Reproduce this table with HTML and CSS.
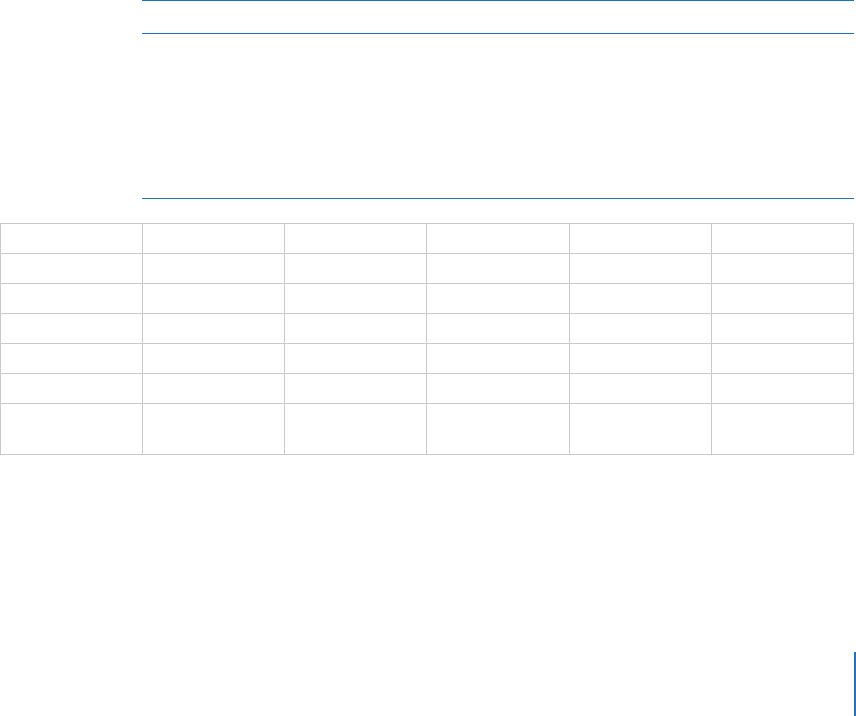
FILE: index.html
```html
<!DOCTYPE html>
<html>

<head>
    <meta charset="UTF-8" />
    <title>Reference</title>
    <link rel="stylesheet" href="styles.css">
</head>

<body>
    <div class="page">
        <div class="topic-head"></div>
        <div class="topic-summary"></div>

        <table class="grid">
            <tr><td></td><td></td><td></td><td></td><td></td><td></td></tr>
            <tr><td></td><td></td><td></td><td></td><td></td><td></td></tr>
            <tr><td></td><td></td><td></td><td></td><td></td><td></td></tr>
            <tr><td></td><td></td><td></td><td></td><td></td><td></td></tr>
            <tr><td></td><td></td><td></td><td></td><td></td><td></td></tr>
            <tr><td></td><td></td><td></td><td></td><td></td><td></td></tr>
            <tr class="tall"><td></td><td></td><td></td><td></td><td></td><td></td></tr>
        </table>

        <div class="side-mark"></div>
    </div>
</body>

</html>
```

FILE: styles.css
```css
* {
    box-sizing: border-box;
}

html,
body {
    margin: 0;
    background: #fff;
    font-family: "Liberation Sans", Arial, sans-serif;
    overflow: hidden;
}

.page {
    width: 856px;
}

.topic-head {
    margin-left: 142px;
    width: 712px;
    height: 33px;
    border-top: 1px solid #1b74c9;
}

.topic-summary {
    margin-left: 142px;
    width: 712px;
    height: 166px;
    border-top: 1px solid #1b74c9;
    border-bottom: 1px solid #1b74c9;
}

.grid {
    margin-top: 24px;
    width: 854px;
    border-collapse: collapse;
    table-layout: fixed;
}

.grid td {
    border: 1px solid #c9c9c9;
    height: 30px;
    padding: 0;
}

.grid .tall td {
    height: 51px;
}

.side-mark {
    margin-left: 854px;
    margin-top: 197px;
    width: 2px;
    height: 64px;
    background: #1b74c9;
}
```
